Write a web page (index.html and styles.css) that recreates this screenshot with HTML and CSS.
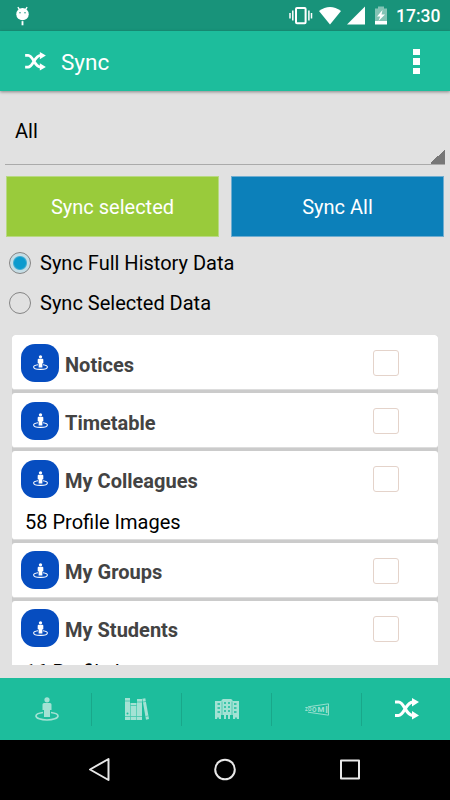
FILE: index.html
```html
<!DOCTYPE html>
<html lang="en">
<head>
<meta charset="utf-8">
<title>Sync</title>
<link rel="stylesheet" href="styles.css">
</head>
<body>
<svg class="defs" width="0" height="0">
  <symbol id="person" viewBox="0 0 24 24">
    <circle cx="12" cy="2.8" r="2.6"/>
    <path d="M9 6h6q1.500 0 1.500 1.500V13h-1.500v7h-6v-7h-1.500V7.500Q7.500 6 9 6z"/>
    <path class="ring" d="M8 15.500C4 16 1 17.200 1 19c0 2.200 5 4 11 4s11-1.800 11-4c0-1.800-3-3-7-3.500"/>
  </symbol>
  <symbol id="shuffle" viewBox="0 0 24 22">
    <path class="stroke" d="M0 4h3.500C9.500 4 10.500 17.500 18 17.500M0 17.500h3.500C9.500 17.500 10.500 4 18 4"/>
    <path d="M17 0l7 4-7 4.500zM17 13l7 4.500-7 4z"/>
  </symbol>
</svg>
<div class="phone">
  <header class="status">
    <svg class="debug" viewBox="0 0 14 20"><path d="M2 .5l2 3M12 .5l-2 3" stroke="#fff" stroke-width="1.500"/><circle cx="7" cy="8" r="6.700" fill="#fff"/><circle cx="4.300" cy="6.500" r=".8" fill="#18937a"/><circle cx="9.700" cy="6.500" r=".8" fill="#18937a"/><path d="M7 15.500v4.500" stroke="#fff" stroke-width="2"/></svg>
    <svg class="signals" viewBox="0 0 100 20">
      <rect x="7" y="2" width="9.600" height="15.200" rx="1" fill="none" stroke="#fff" stroke-width="2"/>
      <path d="M3.800 4.500v10M1 7v5.500M19.900 4.500v10M22.500 7v5.500" stroke="#fff" stroke-width="1.500"/>
      <path d="M30 5Q41-3 52 5L41 18.500z" fill="#fff"/>
      <path d="M58 18.500h18V.5z" fill="#fff"/>
      <path d="M86 2.500h3V.5h6v2h3V18H86z" fill="#83c4b5"/>
      <path d="M86 15h12v3.500H86z" fill="#fff"/><path d="M93.500 4L88 10.500h3.200L89.500 15l6.500-6.500h-3.500z" fill="#fff"/>
    </svg>
    <span class="time">17:30</span>
  </header>
  <div class="appbar">
    <svg class="app-icon"><use href="#shuffle"/></svg>
    <h1>Sync</h1>
    <div class="menu"><i></i><i></i><i></i></div>
  </div>
  <main>
    <div class="spinner"><span>All</span></div>
    <div class="buttons"><button class="green">Sync selected</button><button class="blue">Sync All</button></div>
    <div class="radio"><i class="dial on"></i><span>Sync Full History Data</span></div>
    <div class="radio"><i class="dial"></i><span>Sync Selected Data</span></div>
    <div class="list">
      <section class="card"><div class="row"><b class="badge"><svg><use href="#person"/></svg></b><h2>Notices</h2><i class="check"></i></div></section>
      <section class="card"><div class="row"><b class="badge"><svg><use href="#person"/></svg></b><h2>Timetable</h2><i class="check"></i></div></section>
      <section class="card tall"><div class="row"><b class="badge"><svg><use href="#person"/></svg></b><h2>My Colleagues</h2><i class="check"></i></div><p>58 Profile Images</p></section>
      <section class="card"><div class="row"><b class="badge"><svg><use href="#person"/></svg></b><h2>My Groups</h2><i class="check"></i></div></section>
      <section class="card tall"><div class="row"><b class="badge"><svg><use href="#person"/></svg></b><h2>My Students</h2><i class="check"></i></div><p>16 Profile Images</p></section>
    </div>
  </main>
  <nav class="tabs">
    <div class="tab"><svg class="t-person"><use href="#person"/></svg></div>
    <div class="tab"><svg class="t-books" viewBox="0 0 24 22"><path d="M0 0h5v22H0zM5.500 5h6v17h-6zM12 1h5v21h-5zM17.300.8l3-.6L24 21l-3 .7z"/><path class="cut" d="M0 3h5M0 18.500h5M5.500 7.500h6M5.500 18.500h6M12 4h5M12 18.500h5M18 4l3-.6M20.500 18.500l3-.6"/><circle class="dot" cx="2.500" cy="15.500" r="1"/></svg></div>
    <div class="tab"><svg class="t-building" viewBox="0 0 24 20"><path d="M0 2h6.500V1L8 0h8l1.500 1v1H24v18h-6v-4h-3v4h-2v-4h-2v4H9v-4H6v4H0z"/><path class="cut" d="M7 2.500V18M17 2.500V18"/><path class="windows" d="M2.500 5h2.500M2.500 9h2.500M2.500 13h2.500M9 4h2M13 4h2M9 8h2M13 8h2M9 12h2M13 12h2M19 5h2.500M19 9h2.500M19 13h2.500M3 18.500v1.500M21 18.500v1.500"/></svg></div>
    <div class="tab"><svg class="t-zoom" viewBox="0 0 24 13"><path class="line" d="M3 3.800L23.500.8v11.400L3 9.200"/><text y="8.300"><tspan x="0" font-size="4.500">Z</tspan><tspan x="3" font-size="5">O</tspan><tspan x="7" y="8.600" font-size="6.500">O</tspan><tspan x="12.500" y="9.200" font-size="7.800">M</tspan><tspan x="20.200" y="9.700" font-size="9">I</tspan></text></svg></div>
    <div class="tab active"><svg class="t-shuffle"><use href="#shuffle"/></svg></div>
  </nav>
  <footer class="sysnav">
    <svg viewBox="0 0 24 26"><path d="M20.500 3v21L2 13.500z"/></svg>
    <svg viewBox="0 0 24 26"><circle cx="12" cy="13.500" r="9.800"/></svg>
    <svg viewBox="0 0 24 26"><rect x="3" y="4.500" width="18" height="18"/></svg>
  </footer>
</div>
</body>
</html>
```
FILE: styles.css
```css
* { box-sizing: border-box; }
body { margin: 0; font-family: Roboto, sans-serif; font-size: 20px; color: #000; }
h1, h2, p { margin: 0; }
svg { display: block; flex: none; }
.defs { position: absolute; }
.stroke { fill: none; stroke: currentColor; stroke-width: 3.2; }
.ring { fill: none; stroke: currentColor; stroke-width: 1.700; }
.phone { width: 450px; height: 800px; display: flex; flex-direction: column; overflow: hidden; background: #e1e1e1; }
.status { height: 31px; flex: none; background: #18937a; display: flex; padding: 6px 9px 0 16px; color: #fff; }
.debug { width: 13px; height: 20px; }
.signals { width: 100px; height: 20px; margin-left: auto; }
.time { width: 45px; margin-left: 7px; font-size: 17.500px; font-weight: 500; line-height: 21px; white-space: nowrap; }
.appbar { height: 60px; flex: none; background: #1dbd9c; color: #fff; display: flex; align-items: center; padding: 1px 30px 0 25px; box-shadow: 0 1px 3px #0006; }
.app-icon { width: 21px; height: 19px; fill: currentColor; margin-bottom: 1px; }
.appbar h1 { font-size: 22.500px; font-weight: 400; line-height: 26px; margin: 1px 0 0 15px; }
.menu { margin-left: auto; display: grid; gap: 3px; }
.menu i { width: 7px; height: 6.500px; background: #fff; }
main { height: 587px; flex: none; padding: 0 5px; }
.spinner { height: 74px; border-bottom: 1px solid #aaa; padding: 28px 10px 0; line-height: 24px; background: linear-gradient(135deg, transparent 50%, #777 50%) right bottom / 15px 15px no-repeat; }
.buttons { display: flex; gap: 12px; padding: 11px 1px 0; }
.buttons button { flex: 1; height: 61px; border: 1px solid #b8d982; padding: 1px 0 0; font: inherit; color: #fff; }
.buttons .green { background: #99cb3b; }
.buttons .blue { background: #0c80ba; border-color: #70add0; }
.radio { height: 40px; display: flex; align-items: center; gap: 9px; padding: 0 4px; }
.buttons + .radio { margin-top: 6px; }
.dial { width: 22px; height: 22px; border: 1px solid #858585; border-radius: 50%; }
.dial.on { background: radial-gradient(circle, #0b9bce 0 5.500px, #45aed2 6.500px, #c5dde5 7.500px); }
.list { height: 330px; margin: 12px 7px 0; overflow: hidden; display: flex; flex-direction: column; gap: 3px; background: #cbcbcb; border-radius: 3px 3px 0 0; }
.card { height: 55px; flex: none; background: #fff; border-radius: 3px; border-bottom: 1px solid #ddd; }
.card.tall { height: 88.500px; }
.row { display: flex; height: 55px; padding: 0 39.500px 0 9px; align-items: center; }
.badge { width: 38px; height: 38px; border-radius: 14px; background: #064dc0; color: #fff; display: flex; align-items: center; justify-content: center; }
.badge svg { width: 15px; height: 15px; fill: currentColor; }
.row h2 { font-size: 20px; font-weight: 700; line-height: 24px; color: #434343; margin: 4px 0 0 6px; }
.card:nth-child(n+4) h2 { margin-top: 3px; }
.check { width: 26px; height: 26px; margin: 1px 0 0 auto; border: 1.500px solid #e4d3ca; border-radius: 3px; }
.card p { line-height: 24px; padding-left: 13px; margin-top: 4px; }
.tabs { height: 62px; flex: none; background: #1dbd9c; color: #a3e2d4; display: flex; align-items: center; padding-left: 2px; }
.tab { flex: 0 0 90px; height: 33px; display: flex; align-items: center; justify-content: center; border-right: 1px solid #19a78a; }
.tab:last-child { border: 0; }
.tab svg { fill: currentColor; }
.tab.active { color: #fff; }
.t-person { width: 24px; height: 24px; }
.t-books { width: 24px; height: 22px; }
.t-building { width: 24px; height: 20px; }
.t-zoom { width: 24px; height: 13px; }
.t-zoom text { font-weight: 700; }
.line { fill: none; stroke: currentColor; stroke-width: .9; }
.cut { fill: none; stroke: #1dbd9c; stroke-width: .6; }
.windows { fill: none; stroke: #1dbd9c; stroke-width: 1.700; }
.dot { fill: #1dbd9c; }
.t-shuffle { width: 24px; height: 22px; }
.sysnav { height: 60px; flex: none; background: #000; display: flex; justify-content: center; gap: 101px; padding-top: 16px; }
.sysnav svg { width: 24px; height: 26px; fill: none; stroke: #e8e8e8; stroke-width: 2; stroke-linejoin: round; }
```
